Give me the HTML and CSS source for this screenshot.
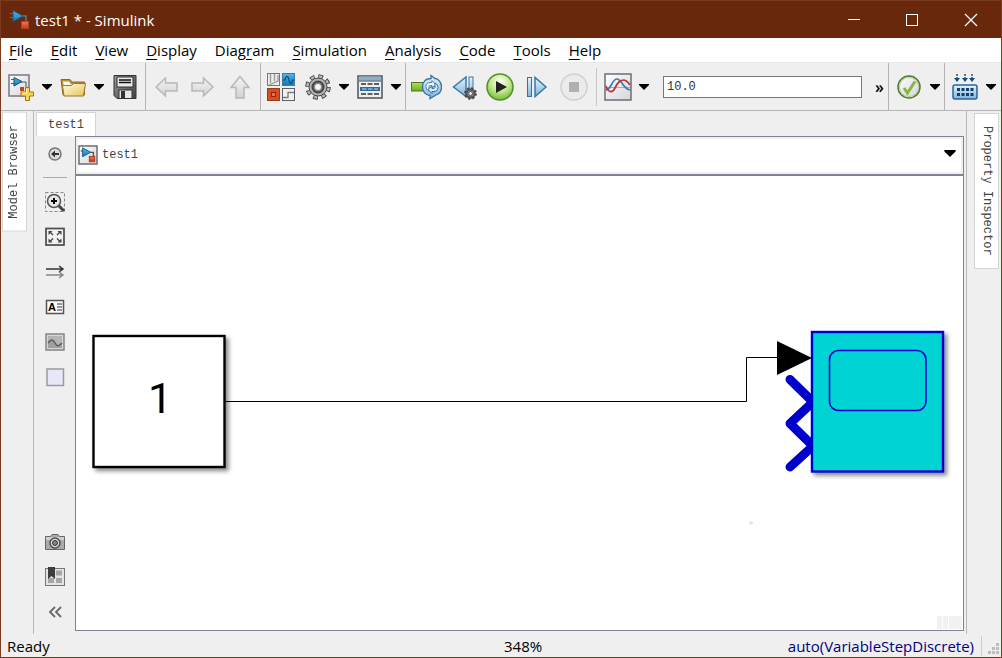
FILE: index.html
```html
<!DOCTYPE html>
<html lang="en">
<head>
<meta charset="utf-8">
<title>test1 * - Simulink</title>
<link rel="stylesheet" href="styles.css">
</head>
<body>
<svg class="defs" width="0" height="0" aria-hidden="true">
  <defs>
    <linearGradient id="gBlue" x1="0" y1="0" x2="0" y2="1"><stop offset="0" stop-color="#e3f3fc"/><stop offset="1" stop-color="#7fb4dc"/></linearGradient>
    <linearGradient id="gDeep" x1="0" y1="0" x2="0" y2="1"><stop offset="0" stop-color="#54b7e8"/><stop offset="1" stop-color="#1276b8"/></linearGradient>
    <linearGradient id="gRed" x1="0" y1="0" x2="0" y2="1"><stop offset="0" stop-color="#f07a50"/><stop offset="1" stop-color="#c9380f"/></linearGradient>
    <linearGradient id="gGrey" x1="0" y1="0" x2="0" y2="1"><stop offset="0" stop-color="#f4f4f4"/><stop offset="1" stop-color="#d2d2d2"/></linearGradient>
    <linearGradient id="gPage" x1="0" y1="0" x2="1" y2="1"><stop offset="0" stop-color="#ffffff"/><stop offset="1" stop-color="#d4d4dc"/></linearGradient>
    <linearGradient id="gFolder" x1="0" y1="0" x2="1" y2="1"><stop offset="0" stop-color="#fffbe0"/><stop offset="1" stop-color="#e6c65a"/></linearGradient>
    <linearGradient id="gDark" x1="0" y1="0" x2="1" y2="1"><stop offset="0" stop-color="#9a9a9a"/><stop offset="1" stop-color="#404040"/></linearGradient>
    <radialGradient id="gPlay" cx="0.5" cy="0.3" r="0.75"><stop offset="0" stop-color="#ffffff"/><stop offset="0.5" stop-color="#c3ea8c"/><stop offset="1" stop-color="#64b428"/></radialGradient>
    <linearGradient id="gGreen" x1="0" y1="0" x2="0" y2="1"><stop offset="0" stop-color="#b4e05a"/><stop offset="1" stop-color="#6cac20"/></linearGradient>
    <filter id="shadow" x="-10%" y="-10%" width="130%" height="130%"><feDropShadow dx="3" dy="3" stdDeviation="2" flood-color="#000000" flood-opacity="0.45"/></filter>
    <symbol id="caret" viewBox="0 0 10 6"><path d="M0 0h10v1L5 6 0 1z" fill="#000"/></symbol>
    <symbol id="model" viewBox="0 0 20 20"><path d="M12 7h4v6" fill="none" stroke="#555" stroke-width="1.5"/><path d="M2 5.500h3" stroke="#1b5e93" stroke-width="1.500"/><path d="M4 2l9 5-9 5z" fill="url(#gDeep)" stroke="#175b8d"/><rect x="11.500" y="11.500" width="6" height="6" fill="url(#gRed)" stroke="#a83414"/></symbol>
  </defs>
</svg>
<div class="window">
  <header class="titlebar">
    <svg class="app-icon" width="22" height="22" viewBox="0 0 22 22" aria-hidden="true"><path d="M12 7h5v6" fill="none" stroke="#6f7478" stroke-width="1.500"/><path d="M1 4.500h3M1 8.500h3" stroke="#2384bd" stroke-width="1"/><path d="M4 1.500l10 5.500-10 5.500z" fill="url(#gDeep)" stroke="#175b8d"/><rect x="12.500" y="12.500" width="7" height="7" fill="url(#gRed)" stroke="#b5421f"/></svg>
    <h1 class="title">test1 * - Simulink</h1>
    <div class="window-buttons">
      <button class="window-button" aria-label="Minimize"><svg width="14" height="14" viewBox="0 0 14 14"><path d="M1 6.500h12" stroke="#fff"/></svg></button>
      <button class="window-button" aria-label="Maximize"><svg width="14" height="14" viewBox="0 0 14 14"><rect x="1.500" y="1.500" width="11" height="11" fill="none" stroke="#fff"/></svg></button>
      <button class="window-button" aria-label="Close"><svg width="14" height="14" viewBox="0 0 14 14"><path d="M1 1l12 12M13 1L1 13" stroke="#fff" stroke-width="1.200"/></svg></button>
    </div>
  </header>

  <nav class="menubar" aria-label="Main menu">
    <button class="menu"><u>F</u>ile</button>
    <button class="menu"><u>E</u>dit</button>
    <button class="menu"><u>V</u>iew</button>
    <button class="menu"><u>D</u>isplay</button>
    <button class="menu">Diag<u>r</u>am</button>
    <button class="menu"><u>S</u>imulation</button>
    <button class="menu"><u>A</u>nalysis</button>
    <button class="menu"><u>C</u>ode</button>
    <button class="menu"><u>T</u>ools</button>
    <button class="menu"><u>H</u>elp</button>
  </nav>

  <div class="toolbar" role="toolbar" aria-label="Model toolbar">
    <div class="group">
      <button class="tool" aria-label="New model"><svg width="28" height="28" viewBox="0 0 28 28"><rect x="2" y="2" width="20" height="21" fill="url(#gPage)" stroke="#77777d" stroke-width="1.500"/><path d="M13 9h6v5" fill="none" stroke="#555"/><path d="M4 6.500h3M4 10.500h3" stroke="#246ba0"/><path d="M7 4.500l8 4-8 4.500z" fill="url(#gDeep)" stroke="#174f7d"/><rect x="13" y="14" width="4" height="4" fill="#c8401a"/><path d="M18.500 14.500h4v4.500h4v4h-4v4.500h-4V23H14v-4h4.500z" fill="#f7d64e" stroke="#a37416"/><path d="M19.500 16v4H15" fill="none" stroke="#fff6bb"/></svg></button><button class="drop" aria-label="New options"><svg width="10" height="6"><use href="#caret"/></svg></button>
      <button class="tool" aria-label="Open"><svg width="28" height="28" viewBox="0 0 28 28"><path d="M2 6.500h9l2 2.500h12.500v13H4z" fill="#b98f3e" stroke="#8a682b"/><path d="M4 8.500h6l2 3h12v3H5z" fill="#fffbea"/><path d="M3.500 12.500h9l2-2h12l-2 12.500H5z" fill="url(#gFolder)" stroke="#9a7730"/></svg></button><button class="drop" aria-label="Open options"><svg width="10" height="6"><use href="#caret"/></svg></button>
      <button class="tool" aria-label="Save"><svg width="28" height="28" viewBox="0 0 28 28"><path d="M3 2.500h22v23H6l-3-3z" fill="url(#gDark)" stroke="#333"/><rect x="6" y="4" width="16" height="10" fill="#e9e9e9" stroke="#333"/><path d="M8 7h12M8 9.500h12" stroke="#111" stroke-width="1.500"/><rect x="8" y="17" width="13" height="8.500" fill="#e6e6e6" stroke="#333"/><path d="M10 18h4v7h-4z" fill="#333"/></svg></button>
    </div>
    <div class="group group-arrows">
      <button class="tool" aria-label="Back" disabled><svg width="28" height="28" viewBox="0 0 28 28"><path d="M3 14l9.500-9v5H24v8H12.500v5z" fill="url(#gGrey)" stroke="#b8b8b8" stroke-width="1.500"/></svg></button>
      <button class="tool" aria-label="Forward" disabled><svg width="28" height="28" viewBox="0 0 28 28"><path d="M24 14l-9.500-9v5H3v8h11.500v5z" fill="url(#gGrey)" stroke="#b8b8b8" stroke-width="1.500"/></svg></button>
      <button class="tool" aria-label="Up to parent" disabled><svg width="28" height="28" viewBox="0 0 28 28"><path d="M15 3.500l9 11h-5V25h-8V14.500H6z" fill="url(#gGrey)" stroke="#b8b8b8" stroke-width="1.500"/></svg></button>
    </div>
    <div class="group group-library">
      <button class="tool" aria-label="Library browser"><svg width="30" height="30" viewBox="0 0 30 30"><rect x="1.500" y="1.500" width="12" height="12" fill="#ececec" stroke="#77777b"/><path d="M4.500 2v9M8.500 2v7M12 3v6L3 13" fill="none" stroke="#999" stroke-width="1.300"/><rect x="16.500" y="1.500" width="12" height="12" fill="url(#gDeep)" stroke="#3c7ca5"/><path d="M17 8h2c1-5 3-5 4 0s3 4 3.500 0h2" fill="none" stroke="#0c4779" stroke-width="1.200"/><rect x="1.500" y="16.500" width="12" height="12" fill="#d74d1f" stroke="#993a1d"/><rect x="5.500" y="20.500" width="4" height="4" fill="#e4764f" stroke="#8a270c"/><rect x="16.500" y="16.500" width="12" height="12" fill="#f0f0f2" stroke="#606064"/><path d="M17 25.500h5v-5h6" fill="none" stroke="#7b7b7f" stroke-width="1.300"/></svg></button>
      <div class="pair"><button class="tool" aria-label="Model configuration"><svg width="28" height="28" viewBox="0 0 28 28"><circle cx="14" cy="14" r="10.500" fill="none" stroke="#444" stroke-width="4.500" stroke-dasharray="4.600 3.647"/><circle cx="14" cy="14" r="10.500" fill="none" stroke="#b9b9b9" stroke-width="2.700" stroke-dasharray="3 5.247" stroke-dashoffset="-0.800"/><circle cx="14" cy="14" r="9" fill="#b2b2b2" stroke="#4a4a4a"/><circle cx="14" cy="14" r="5.500" fill="#888" stroke="#454545" stroke-width="2"/><circle cx="14" cy="14" r="3" fill="#f4f4f4"/></svg></button><button class="drop" aria-label="Configuration options"><svg width="10" height="6"><use href="#caret"/></svg></button></div>
      <div class="pair"><button class="tool" aria-label="Model explorer"><svg width="28" height="28" viewBox="0 0 28 28"><rect x="2" y="3" width="24" height="22" fill="#efefef" stroke="#4b565d" stroke-width="1.500"/><rect x="3" y="3.500" width="22" height="4" fill="#8faec4"/><path d="M3 8h22" stroke="#345067"/><path d="M5 11h18M5 21h18" stroke="#333" stroke-width="1.500" stroke-dasharray="5 1.500"/><rect x="4" y="14" width="20" height="4" fill="#2e6ca4"/><path d="M6 16h16" stroke="#bedcf4" stroke-dasharray="4.500 1.500"/></svg></button><button class="drop" aria-label="Explorer options"><svg width="10" height="6"><use href="#caret"/></svg></button></div>
    </div>
    <div class="group group-run">
      <button class="tool" aria-label="Fast restart"><svg width="32" height="28" viewBox="0 0 32 28"><rect x="1.500" y="9.500" width="13" height="8.500" fill="url(#gGreen)" stroke="#4f7a22"/><path d="M21 5.500c-6 0-8.500 4-8.500 8.500s3 8.500 7.500 8.500v3l6-3.500c3-1 5.500-4 5.500-8 0-4.500-3-8.500-6.500-8.500l-4-3z" fill="url(#gBlue)" stroke="#376f9e" stroke-width="1.300"/><path d="M19 18c-2-1-3-2.500-3-4.500 0-2.500 1.500-4 4-4h2v-2l4 4-4 3.500v-2.500h-1.500c-1 0-1.500.5-1.500 1.500z" fill="#f2f8fd" stroke="#5083ad"/><path d="M25 10c2 1 3 2.500 3 4.500 0 2.500-1.500 4-4 4h-2v2l-4-4 4-3.500v2.500h1.500c1 0 1.500-.5 1.500-1.500z" fill="#d5e8f6" stroke="#376f9e"/></svg></button>
      <button class="tool tool-tight" aria-label="Step back"><svg width="28" height="28" viewBox="0 0 28 28"><path d="M15 4v19.500L2.500 14z" fill="url(#gBlue)" stroke="#3d78a6" stroke-width="1.500"/><rect x="18" y="4" width="4" height="19" fill="url(#gBlue)" stroke="#3d78a6"/><circle cx="19.500" cy="20.500" r="4" fill="#ccc" stroke="#555" stroke-width="2.500"/><circle cx="19.500" cy="20.500" r="5.500" fill="none" stroke="#444" stroke-width="1.700" stroke-dasharray="2.160 2.160"/><circle cx="19.500" cy="20.500" r="2" fill="#eee" stroke="#444"/></svg></button>
      <button class="tool" aria-label="Run"><svg width="30" height="30" viewBox="0 0 30 30"><circle cx="15" cy="15" r="13" fill="url(#gPlay)" stroke="#568d2c" stroke-width="1.500"/><path d="M11 9l11 6-11 6z" fill="#222"/></svg></button>
      <button class="tool" aria-label="Step forward"><svg width="28" height="28" viewBox="0 0 28 28"><rect x="4.500" y="4.500" width="4" height="19" fill="url(#gBlue)" stroke="#35709f"/><path d="M12 4.500v19L23 14z" fill="url(#gBlue)" stroke="#3d78a6" stroke-width="1.500"/></svg></button>
      <button class="tool" aria-label="Stop" disabled><svg width="30" height="30" viewBox="0 0 30 30"><circle cx="15" cy="15" r="13" fill="#ebebeb" stroke="#d0d0d0" stroke-width="1.500"/><rect x="10" y="10" width="10" height="10" fill="#b0b0b0"/></svg></button>
      <span class="divider"></span>
      <div class="pair"><button class="tool" aria-label="Simulation data inspector"><svg width="30" height="30" viewBox="0 0 30 30"><rect x="2" y="2" width="26" height="26" fill="url(#gPage)" stroke="#6e6e73" stroke-width="1.500"/><path d="M3 15.500h24" stroke="#aaa"/><path d="M3 18c5 0 6-11 11-11s5 9 13 11" fill="none" stroke="#3a7cb5" stroke-width="1.700"/><path d="M3 14c2 6 6 8 9 2s5-8 9-8c3 0 4 3 6 5" fill="none" stroke="#bd3431" stroke-width="1.700"/></svg></button><button class="drop" aria-label="Inspector options"><svg width="10" height="6"><use href="#caret"/></svg></button></div>
      <input class="stop-time" type="text" aria-label="Simulation stop time" value="10.0">
      <button class="more" aria-label="More tools">»</button>
    </div>
    <div class="group">
      <button class="tool" aria-label="Model advisor"><svg width="28" height="28" viewBox="0 0 28 28"><circle cx="14" cy="14" r="11" fill="url(#gPage)" stroke="#55782f" stroke-width="1.500"/><circle cx="14" cy="14" r="9.500" fill="none" stroke="#b3ce90"/><path d="M9 15l3.500 5L20 8.500" fill="none" stroke="#86b83a" stroke-width="3"/></svg></button><button class="drop" aria-label="Advisor options"><svg width="10" height="6"><use href="#caret"/></svg></button>
    </div>
    <div class="group">
      <button class="tool" aria-label="Build"><svg width="28" height="28" viewBox="0 0 28 28"><path d="M6 1v7M14 1v7M21 1v7" stroke="#235687" stroke-width="1.500" stroke-dasharray="2 1"/><path d="M3 5h6l-3 4zM11 5h6l-3 4zM18 5h6l-3 4z" fill="#174b7c"/><rect x="2" y="12" width="24" height="14" rx="2" fill="url(#gBlue)" stroke="#2b659b" stroke-width="1.500"/><path d="M6 16.500h17M6 21.500h17" stroke="#163e68" stroke-width="3" stroke-dasharray="3 1.500"/></svg></button><button class="drop" aria-label="Build options"><svg width="10" height="6"><use href="#caret"/></svg></button>
    </div>
  </div>

  <main class="workspace">
    <aside class="dock dock-left"><button class="dock-tab dock-tab-left">Model Browser</button></aside>
    <section class="editor">
      <div class="tabs"><button class="tab">test1</button></div>
      <div class="editor-body">
        <div class="palette">
          <button class="pal" aria-label="Hide explorer bar"><svg width="22" height="22" viewBox="0 0 22 22"><circle cx="11" cy="11" r="6" fill="#ddd" stroke="#777" stroke-width="1.500"/><path d="M7 11l4-3.500V10h4v2h-4v2.500z" fill="#333"/></svg></button>
          <hr class="pal-line">
          <button class="pal" aria-label="Zoom"><svg width="22" height="22" viewBox="0 0 22 22"><rect x="1.500" y="1.500" width="19" height="19" fill="none" stroke="#888" stroke-dasharray="3 2"/><path d="M14 14l6 6" stroke="#444" stroke-width="3"/><circle cx="10" cy="10" r="6.500" fill="#e7e7e7" stroke="#555" stroke-width="1.500"/><path d="M7 10h6M10 7v6" stroke="#000" stroke-width="2"/></svg></button>
          <button class="pal" aria-label="Fit to view"><svg width="22" height="22" viewBox="0 0 22 22"><rect x="2" y="2.500" width="18" height="16.500" fill="#f1f1f1" stroke="#4c4c4c" stroke-width="1.700"/><path d="M4.500 5h4l-4 4zM17.500 5h-4l4 4zM4.500 16.500h4l-4-4zM17.500 16.500h-4l4-4z" fill="#444"/><path d="M6 6l3 3M16 6l-3 3M6 15.500l3-3M16 15.500l-3-3" stroke="#444" stroke-width="1.300"/></svg></button>
          <button class="pal" aria-label="Sample time legend"><svg width="22" height="22" viewBox="0 0 22 22"><path d="M2 8h16M15 5l4 3-4 3" fill="none" stroke="#333" stroke-width="1.500"/><path d="M2 14h16M15 11l4 3-4 3" fill="none" stroke="#888" stroke-width="1.500"/></svg></button>
          <button class="pal" aria-label="Annotation"><svg width="22" height="22" viewBox="0 0 22 22"><rect x="2.500" y="4.500" width="17" height="13" fill="#fafafa" stroke="#555" stroke-width="1.500"/><text class="note-letter" x="4" y="15">A</text><path d="M13 8h5M13 11h5M13 14h5" stroke="#333"/></svg></button>
          <button class="pal" aria-label="Image"><svg width="22" height="22" viewBox="0 0 22 22"><rect x="2" y="3" width="18" height="16" fill="#d7d7d7" stroke="#858585" stroke-width="1.500"/><rect x="4" y="5" width="14" height="12" fill="#b4b4b4"/><path d="M4 12c3-4 5-4 7 0s4 3 7 0v5H4z" fill="#a0a0a0"/><path d="M4 12c3-4 5-4 7 0s4 3 7 0" fill="none" stroke="#5d5d5d" stroke-width="1.500"/></svg></button>
          <button class="pal" aria-label="Area"><svg width="22" height="22" viewBox="0 0 22 22"><rect x="3" y="3" width="16.500" height="16.500" fill="#e7e7f7" stroke="#9b9b9f" stroke-width="1.500"/></svg></button>
          <span class="pal-space"></span>
          <button class="pal" aria-label="Screenshot"><svg width="22" height="22" viewBox="0 0 22 22"><path d="M1.500 5.500h5l1.500-2h6l1.500 2h5v13h-19z" fill="#aaa" stroke="#666"/><path d="M2 6h18v3H2z" fill="#d0d0d0"/><circle cx="11" cy="12" r="5" fill="#e0e0e0" stroke="#4d4d4d" stroke-width="1.500"/><circle cx="11" cy="12" r="2.500" fill="#888" stroke="#333"/></svg></button>
          <button class="pal" aria-label="Viewmarks"><svg width="22" height="22" viewBox="0 0 22 22"><rect x="1.500" y="2.500" width="19" height="17" fill="#e4e4e4" stroke="#777"/><path d="M12 4.500h6v5h-6zM12 12h6v5h-6zM4 12h6v5H4z" fill="#a6a6a6"/><path d="M4 1h7v12l-3.500-3L4 13z" fill="#3d3d3d"/></svg></button>
          <button class="pal" aria-label="Collapse palette"><svg width="22" height="22" viewBox="0 0 22 22"><path d="M11 6l-5 5 5 5M17 6l-5 5 5 5" fill="none" stroke="#666" stroke-width="1.800"/></svg></button>
        </div>
        <div class="document">
          <div class="address">
            <svg class="crumb-icon" width="20" height="20" viewBox="0 0 20 20" aria-hidden="true"><rect x="1" y="1" width="18" height="18" fill="url(#gPage)" stroke="#6c6c70" stroke-width="1.500"/><use href="#model" width="18" height="18" x="1" y="1"/></svg>
            <a class="crumb" href="#">test1</a>
            <button class="drop address-drop" aria-label="Model hierarchy"><svg width="12" height="7" viewBox="0 0 10 6"><use href="#caret"/></svg></button>
          </div>
          <div class="canvas">
            <svg class="diagram" width="100%" height="100%" role="img" aria-label="Constant block connected to a Scope block">
              <g filter="url(#shadow)"><rect x="17.500" y="160" width="131" height="131" fill="#fff" stroke="#000" stroke-width="2.400"/></g>
              <text class="constant" x="84" y="237">1</text>
              <path d="M150 225.500h520.500v-44H702" fill="none" stroke="#000"/>
              <path d="M714 203.500l23 22.500-23 21.500 23 22.500-23 21" fill="none" stroke="#0000cd" stroke-width="9" stroke-linecap="round" stroke-linejoin="round"/>
              <g filter="url(#shadow)"><rect x="736" y="156" width="131" height="139.500" fill="#00d3d3" stroke="#0000cd" stroke-width="2.400"/></g>
              <path d="M701 165v34l35-17z" fill="#000"/>
              <rect x="753.500" y="174.500" width="96.500" height="60" rx="9" fill="none" stroke="#0000cd" stroke-width="1.600"/>
              <circle cx="675" cy="347" r="2" fill="#e6e6e6"/>
            </svg>
            <svg class="corner-mark" width="26" height="13" aria-hidden="true"><path d="M0 0h5v13H0zM6 0h5v13H6zM12 0h13v13H12z" fill="#f1f1f1"/></svg>
          </div>
        </div>
      </div>
    </section>
    <aside class="dock dock-right"><button class="dock-tab dock-tab-right">Property Inspector</button></aside>
  </main>

  <footer class="status">
    <span class="status-text">Ready</span>
    <span class="status-zoom">348%</span>
    <a class="solver" href="#">auto(VariableStepDiscrete)</a>
    <svg class="grip" width="12" height="12" viewBox="0 0 12 12" aria-hidden="true"><path d="M0 8h3v3H0zM4 8h3v3H4zM8 8h3v3H8zM4 4h3v3H4zM8 4h3v3H8zM8 0h3v3H8z" fill="#bdbdbd"/></svg>
  </footer>
</div>
</body>
</html>
```
FILE: styles.css
```css
* {
  box-sizing: border-box;
}

body {
  margin: 0;
  color: #000;
  font: 15px/20px "Open Sans", "Noto Sans", sans-serif;
}

button {
  margin: 0;
  padding: 0;
  border: 0;
  background: none;
  color: inherit;
  font: inherit;
}

svg {
  display: block;
  flex: none;
}

.defs {
  position: absolute;
}

.window {
  display: flex;
  flex-direction: column;
  min-height: 100vh;
  border: 1px solid #7a3c20;
  background: #efefef;
}

.titlebar {
  display: flex;
  align-items: center;
  height: 37px;
  padding-left: 8px;
  background: #69280c;
  color: #fff;
}

.title {
  flex: 1;
  margin: 0 0 0 4px;
  font-size: 15px;
  font-weight: 400;
}

.window-buttons {
  display: flex;
}

.window-button {
  display: grid;
  place-items: center;
  width: 58px;
  height: 37px;
}

.window-button:last-child {
  width: 60px;
}

.menubar {
  display: flex;
  gap: 18px;
  height: 25px;
  padding: 2px 8px;
  border-bottom: 1px solid #e8e8e8;
  background: #fff;
}

.menu u {
  text-underline-offset: 3px;
}

.toolbar {
  display: flex;
  height: 48px;
  border-bottom: 1px solid #b4b4b4;
}

.group {
  display: flex;
  align-items: center;
  padding: 0 3px;
  border-right: 1px solid #b4b4b4;
}

.group:last-child {
  padding-right: 1px;
  border-right: 0;
}

.group:nth-last-child(2) {
  padding-right: 0;
}

.group-arrows {
  gap: 2px;
  padding: 0 4px;
}

.group-library {
  padding-right: 0;
}

.group-library .tool:first-child {
  margin-right: 3px;
}

.group-library .pair .tool:first-child {
  margin-right: 0;
}

.group-run {
  flex: 1;
  gap: 3px;
}

.group-run .tool-tight {
  margin: 0 -2px 0 2px;
}

.pair {
  display: flex;
}

.tool {
  display: grid;
  place-items: center;
  width: 34px;
  height: 34px;
}

.drop {
  display: grid;
  place-items: center;
  width: 18px;
}

.divider {
  width: 1px;
  height: 38px;
  margin: 0 1px 0 2px;
  background: #c8c8c8;
}

.stop-time {
  flex: 1;
  min-width: 60px;
  height: 22px;
  margin: 0 8px 0 7px;
  padding: 0 3px;
  border: 1px solid #777;
  background: #fff;
  color: #333;
  font: 12px/18px "Liberation Mono", monospace;
}

.more {
  width: 13px;
  margin-right: -1px;
  font-size: 16px;
  font-weight: 600;
}

.workspace {
  display: flex;
  flex: 1;
}

.dock {
  display: flex;
  align-items: flex-start;
  padding: 1px;
}

.dock-left {
  width: 33px;
  border-right: 1px solid #b8b8b8;
}

.dock-right {
  justify-content: flex-end;
  width: 35px;
  padding: 2px 2px 0 0;
  border-left: 1px solid #b8b8b8;
}

.dock-tab {
  width: 25px;
  border: 1px solid #d4d4d4;
  background: #fff;
  color: #444;
  font: 12px/23px "Liberation Mono", monospace;
  writing-mode: vertical-rl;
}

.dock-tab-left {
  padding: 12px 0;
  transform: rotate(180deg);
}

.dock-tab-right {
  padding: 12px 0;
}

.editor {
  display: flex;
  flex: 1;
  flex-direction: column;
  min-width: 0;
  padding: 1px 2px 3px 2px;
}

.tabs {
  display: flex;
}

.tab {
  height: 24px;
  padding: 0 11px;
  border: 1px solid #d4d4d4;
  border-bottom: 0;
  background: #fff;
  color: #444;
  font: 12px/22px "Liberation Mono", monospace;
}

.editor-body {
  display: flex;
  flex: 1;
}

.palette {
  display: flex;
  flex-direction: column;
  gap: 13px;
  width: 39px;
  padding: 7px 8px 8px;
}

.pal-line {
  width: 24px;
  height: 1px;
  margin: -1px 0 0 -1px;
  border: 0;
  background: #aaa;
}

.pal {
  display: grid;
  place-items: center;
  width: 22px;
  height: 22px;
}

.pal-space {
  flex: 1;
}

.note-letter {
  font: 700 11px "Liberation Sans", sans-serif;
}

.document {
  display: flex;
  flex: 1;
  flex-direction: column;
  border: 1px solid #80838f;
}

.address {
  display: flex;
  align-items: center;
  gap: 4px;
  height: 37px;
  padding: 0 2px 2px 0;
  border: 2px solid #efefef;
  background: #fff;
}

.crumb {
  flex: 1;
  color: #444;
  font: 12px/20px "Liberation Mono", monospace;
  text-decoration: none;
}

.address-drop {
  padding-bottom: 2px;
}

.canvas {
  position: relative;
  display: flex;
  flex: 1;
  border-top: 2px solid #80838f;
  background: #fff;
}

.constant {
  font: 43px Roboto, sans-serif;
  text-anchor: middle;
}

.diagram {
  flex: 1;
  min-width: 0;
}

.corner-mark {
  position: absolute;
  right: 0;
  bottom: 1px;
}

.status {
  display: grid;
  grid-template-columns: 50% auto 1fr auto;
  align-items: center;
  height: 23px;
  padding-left: 6px;
}

.solver {
  justify-self: end;
  padding-right: 7px;
  border-right: 1px solid #ccc;
  color: #00007f;
  text-decoration: none;
}

.grip {
  align-self: end;
  margin: 0 1px 2px 6px;
}
```
